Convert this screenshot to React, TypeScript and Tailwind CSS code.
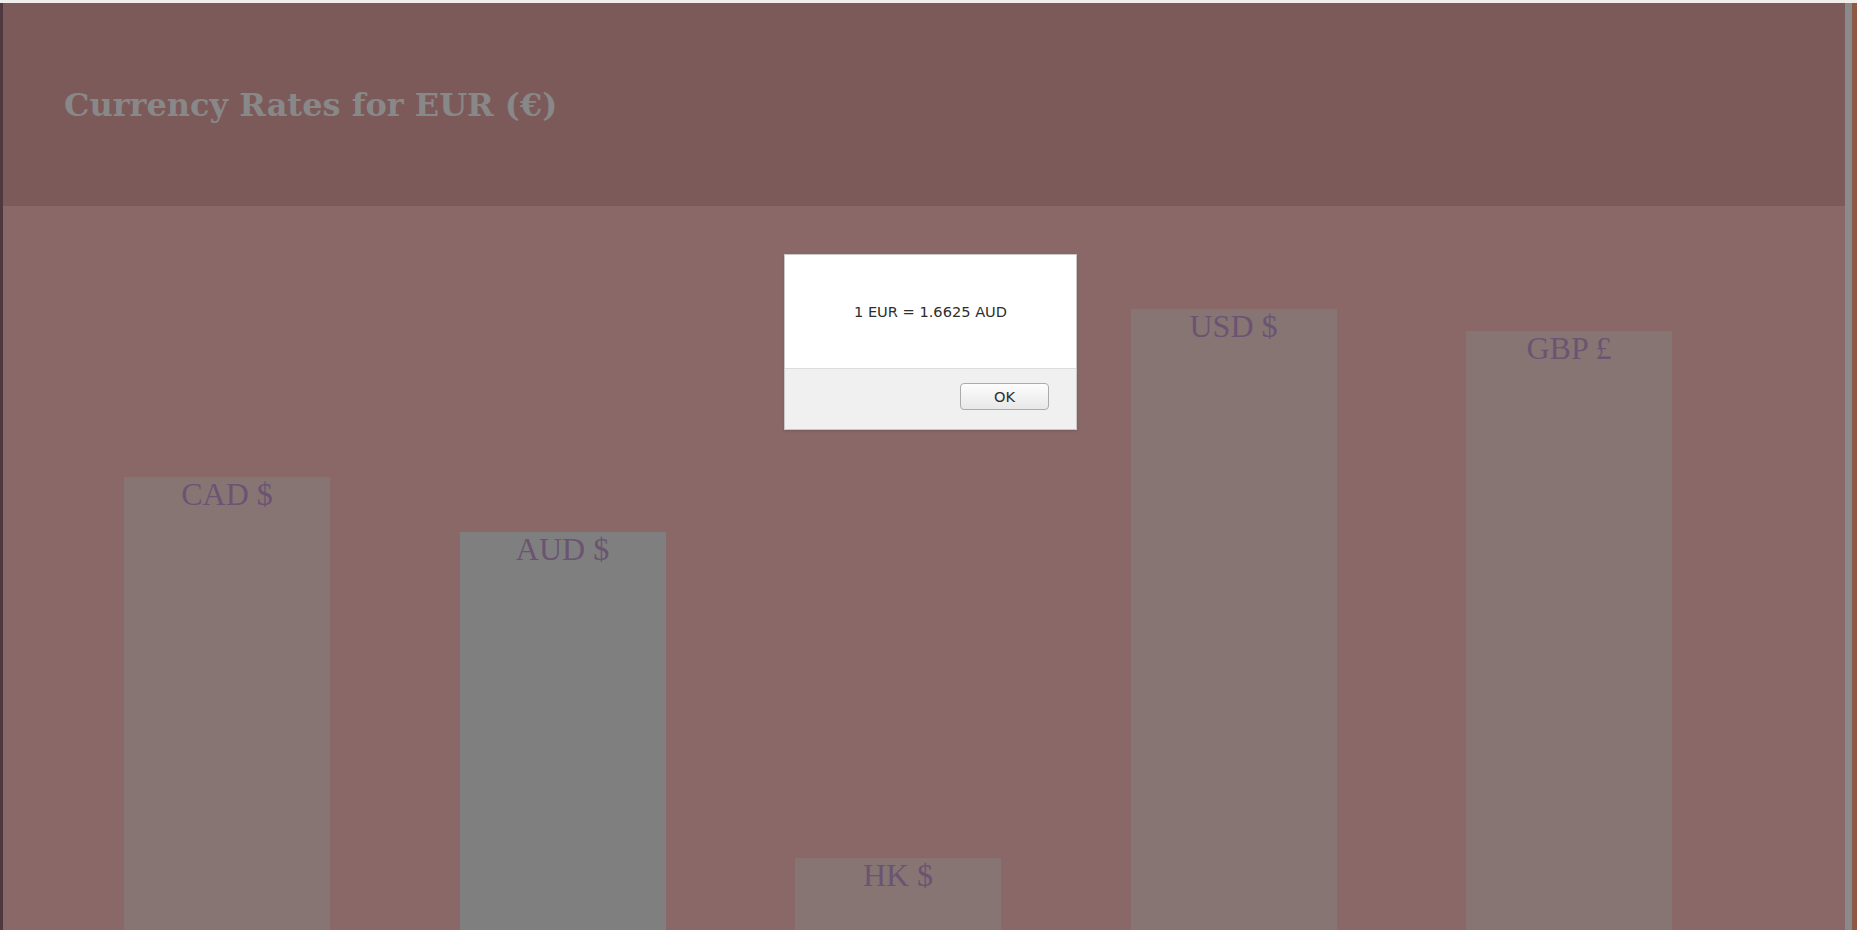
const bars = [
  { label: 'CAD $', height: 453, selected: false },
  { label: 'AUD $', height: 398, selected: true },
  { label: 'HK $', height: 72, selected: false },
  { label: 'USD $', height: 621, selected: false },
  { label: 'GBP £', height: 599, selected: false },
]

function AlertBox() {
  return (
    <div className="absolute left-[784px] top-[254px] w-[293px] h-[176px] flex flex-col border border-[#c8c8c8] bg-white shadow-sm">
      <div className="h-[114px] flex items-center justify-center text-[14.6px] text-[#2e2e2e] font-['DejaVu_Sans',sans-serif] border-b border-[#dcdcdc]">
        1 EUR = 1.6625 AUD
      </div>
      <div className="flex-1 bg-[#f0f0f0] flex justify-end items-start pt-[14px] pr-[27px]">
        <button className="w-[89px] h-[27px] rounded-[4px] border border-[#ababab] bg-gradient-to-b from-[#fdfdfd] to-[#e8e8e8] text-[14.6px] text-[#2e2e2e] font-['DejaVu_Sans',sans-serif]">
          OK
        </button>
      </div>
    </div>
  )
}

export default function App() {
  return (
    <div className="relative w-[1857px] h-[930px] overflow-hidden flex flex-col bg-[#8b6868]">
      <div className="h-[3px] bg-[#f1eeec]" />
      <div className="flex flex-1 min-h-0">
        <div className="w-[3px] bg-[#4e393e]" />
        <main className="flex-1 flex flex-col min-w-0">
          <header className="h-[203px] bg-[#7d5a5a] flex items-center pl-[61px]">
            <h1 className="text-[32px] font-bold text-[#888888] font-['DejaVu_Serif',serif]">
              Currency Rates for EUR (€)
            </h1>
          </header>
          <section className="flex-1 flex items-end pl-[121px] gap-[129.5px] bg-[#8b6868]">
            {bars.map((bar) => (
              <div
                key={bar.label}
                className={`w-[206px] shrink-0 text-center text-[32px] leading-[1.08] text-[#6b5472] font-['Liberation_Serif',serif] ${
                  bar.selected ? 'bg-[#7f7f7f]' : 'bg-[#877574]'
                }`}
                style={{ height: bar.height }}
              >
                {bar.label}
              </div>
            ))}
          </section>
        </main>
        <div className="w-[7px] bg-[#8a8a8a]" />
        <div className="w-[5px] bg-[#8e5a46]" />
      </div>
      <AlertBox />
    </div>
  )
}
